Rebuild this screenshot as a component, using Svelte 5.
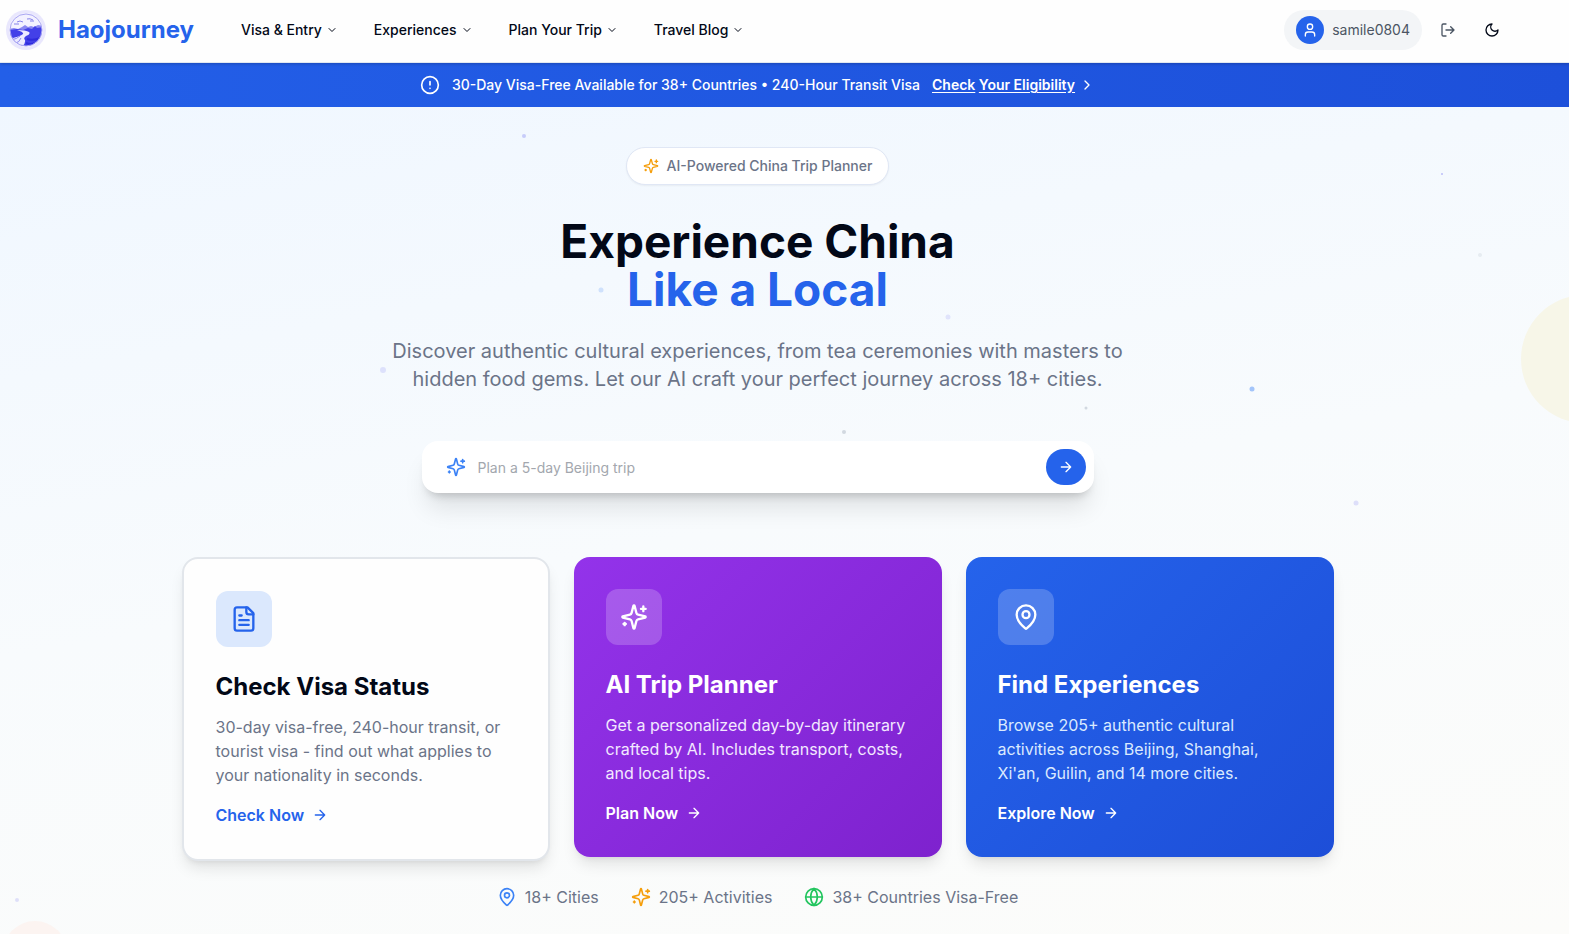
<script lang="ts">
	type Dot = { x: number; y: number; size: number; color: string; opacity: number }

	const nav = ['Visa & Entry', 'Experiences', 'Plan Your Trip', 'Travel Blog']

	const cards = [
		{
			kind: 'visa',
			icon: 'file',
			title: 'Check Visa Status',
			text: '30-day visa-free, 240-hour transit, or tourist visa - find out what applies to your nationality in seconds.',
			action: 'Check Now'
		},
		{
			kind: 'planner',
			icon: 'sparkles',
			title: 'AI Trip Planner',
			text: 'Get a personalized day-by-day itinerary crafted by AI. Includes transport, costs, and local tips.',
			action: 'Plan Now'
		},
		{
			kind: 'explore',
			icon: 'pin',
			title: 'Find Experiences',
			text: "Browse 205+ authentic cultural activities across Beijing, Shanghai, Xi'an, Guilin, and 14 more cities.",
			action: 'Explore Now'
		}
	]

	const stats = [
		{ icon: 'pin', color: '#3b82f6', label: '18+ Cities' },
		{ icon: 'sparkles', color: '#f59e0b', label: '205+ Activities' },
		{ icon: 'globe', color: '#22c55e', label: '38+ Countries Visa-Free' }
	]

	// centre of each dot: x in percent of the hero, y in pixels from its top
	const dots: Dot[] = [
		{ x: 33.4, y: 29, size: 4, color: '#6366f1', opacity: 0.3 },
		{ x: 38.3, y: 183, size: 5, color: '#3b82f6', opacity: 0.2 },
		{ x: 24.4, y: 263, size: 6, color: '#6366f1', opacity: 0.16 },
		{ x: 60.4, y: 210, size: 5, color: '#6366f1', opacity: 0.14 },
		{ x: 69.2, y: 301, size: 3, color: '#64748b', opacity: 0.25 },
		{ x: 53.8, y: 325, size: 4, color: '#64748b', opacity: 0.25 },
		{ x: 91.9, y: 67, size: 2, color: '#6366f1', opacity: 0.4 },
		{ x: 94.3, y: 148, size: 4, color: '#64748b', opacity: 0.1 },
		{ x: 79.8, y: 282, size: 5, color: '#3b82f6', opacity: 0.45 },
		{ x: 86.4, y: 396, size: 5, color: '#6366f1', opacity: 0.18 },
		{ x: 1.1, y: 793, size: 4, color: '#6366f1', opacity: 0.18 }
	]

	let query = $state('')
</script>

{#snippet icon(name: string, size: number)}
	<svg
		width={size}
		height={size}
		viewBox="0 0 24 24"
		fill="none"
		stroke="currentColor"
		stroke-width="2"
		stroke-linecap="round"
		stroke-linejoin="round"
		aria-hidden="true"
	>
		{#if name === 'sparkles'}
			<path d="M9.937 15.5A2 2 0 0 0 8.5 14.063l-6.135-1.582a.5.5 0 0 1 0-.962L8.5 9.936A2 2 0 0 0 9.937 8.5l1.582-6.135a.5.5 0 0 1 .963 0L14.063 8.5A2 2 0 0 0 15.5 9.937l6.135 1.581a.5.5 0 0 1 0 .964L15.5 14.063a2 2 0 0 0-1.437 1.437l-1.582 6.135a.5.5 0 0 1-.963 0z" />
			<path d="M20 3v4M22 5h-4M4 17v2M5 18H3" />
		{:else if name === 'pin'}
			<path d="M20 10c0 4.993-5.539 10.193-7.399 11.799a1 1 0 0 1-1.202 0C9.539 20.193 4 14.993 4 10a8 8 0 0 1 16 0" />
			<circle cx="12" cy="10" r="3" />
		{:else if name === 'file'}
			<path d="M15 2H6a2 2 0 0 0-2 2v16a2 2 0 0 0 2 2h12a2 2 0 0 0 2-2V7Z" />
			<path d="M14 2v4a2 2 0 0 0 2 2h4M10 9H8M16 13H8M16 17H8" />
		{:else if name === 'globe'}
			<circle cx="12" cy="12" r="10" />
			<path d="M12 2a14.5 14.5 0 0 0 0 20 14.5 14.5 0 0 0 0-20M2 12h20" />
		{:else if name === 'arrow'}
			<path d="M5 12h14M12 5l7 7-7 7" />
		{:else if name === 'down'}
			<path d="m6 9 6 6 6-6" />
		{:else if name === 'right'}
			<path d="m9 18 6-6-6-6" />
		{:else if name === 'alert'}
			<circle cx="12" cy="12" r="10" />
			<path d="M12 8v4M12 16h.01" />
		{:else if name === 'user'}
			<path d="M19 21v-2a4 4 0 0 0-4-4H9a4 4 0 0 0-4 4v2" />
			<circle cx="12" cy="7" r="4" />
		{:else if name === 'logout'}
			<path d="M9 21H5a2 2 0 0 1-2-2V5a2 2 0 0 1 2-2h4M16 17l5-5-5-5M21 12H9" />
		{:else if name === 'moon'}
			<path d="M12 3a6 6 0 0 0 9 9 9 9 0 1 1-9-9Z" />
		{/if}
	</svg>
{/snippet}

<div class="page">
	<header class="header">
		<a class="brand" href="/">
			<svg width="40" height="40" viewBox="0 0 40 40" aria-hidden="true">
				<defs>
					<clipPath id="logo-disc"><circle cx="20" cy="20" r="16" /></clipPath>
				</defs>
				<circle cx="20" cy="20" r="20" fill="#e9e7fd" />
				<circle cx="20" cy="20" r="17" fill="#f3f1ff" />
				<g clip-path="url(#logo-disc)">
					<path d="M3 19l5-1 4 1 4-2 3-2 3 2 3-1 3 1 4-2 6 1v22H3z" fill="#8a87f1" />
					<path d="M3 20l8-1 6 1 5-2 4 1 3-3 2 2 7-1v22H3z" fill="#4340e8" />
					<path d="M11 20q9 0 12 2 2 2-3 4-3 2-1 4 1 4-5 8L4 33q-1-4 3-5 8-2 10-4 1-2-6-4z" fill="#eceaff" />
					<path d="M5 30q6-1 9-4M8 34q6-2 7-6" fill="none" stroke="#8a87f1" stroke-width="1" />
					<path d="M21 29q6 2 13-1M20 33q5 2 9 0" fill="none" stroke="#2f2bdc" stroke-width="2" />
					<path d="M11 12q3-2 6 0M21 9q3-1 6 1M8 14h5M24 11h4" fill="none" stroke="#8683ea" stroke-width="1" />
				</g>
				<circle cx="20" cy="20" r="16" fill="none" stroke="#a9a6f2" stroke-width="1" />
			</svg>
			<span>Haojourney</span>
		</a>
		<nav class="nav">
			{#each nav as item}
				<button>{item}{@render icon('down', 12)}</button>
			{/each}
		</nav>
		<div class="account">
			<a class="user" href="/profile">
				<span class="avatar">{@render icon('user', 16)}</span>
				samile0804
			</a>
			<button class="tool logout" aria-label="Log out">{@render icon('logout', 16)}</button>
			<button class="tool" aria-label="Toggle dark mode">{@render icon('moon', 16)}</button>
		</div>
	</header>

	<div class="banner">
		{@render icon('alert', 20)}
		<span>30-Day Visa-Free Available for 38+ Countries • 240-Hour Transit Visa</span>
		<a href="/visa"><span><u>Check</u> <u>Your Eligibility</u></span>{@render icon('right', 16)}</a>
	</div>

	<main class="hero">
		<div class="decor" aria-hidden="true">
			{#each dots as dot}
				<i
					class="dot"
					style:left="{dot.x}%"
					style:top="{dot.y}px"
					style:width="{dot.size}px"
					style:height="{dot.size}px"
					style:background={dot.color}
					style:opacity={dot.opacity}
				></i>
			{/each}
			<i class="sun"></i>
			<i class="blush"></i>
		</div>

		<div class="tag">{@render icon('sparkles', 16)}AI-Powered China Trip Planner</div>
		<h1>Experience China<br /><span>Like a Local</span></h1>
		<p class="lead">
			Discover authentic cultural experiences, from tea ceremonies with masters to hidden food gems.
			Let our AI craft your perfect journey across 18+ cities.
		</p>

		<form class="search" onsubmit={(e) => e.preventDefault()}>
			{@render icon('sparkles', 20)}
			<input type="text" aria-label="Describe your trip" placeholder="Plan a 5-day Beijing trip" bind:value={query} />
			<button aria-label="Plan trip">{@render icon('arrow', 16)}</button>
		</form>

		<div class="cards">
			{#each cards as card}
				<article class="card {card.kind}">
					<div class="badge">{@render icon(card.icon, 28)}</div>
					<h2>{card.title}</h2>
					<p>{card.text}</p>
					<a href="/{card.kind}">{card.action}{@render icon('arrow', 16)}</a>
				</article>
			{/each}
		</div>

		<ul class="stats">
			{#each stats as stat}
				<li>
					<span style:color={stat.color}>{@render icon(stat.icon, 20)}</span>
					{stat.label}
				</li>
			{/each}
		</ul>
	</main>
</div>

<style>
	:global(body) {
		margin: 0;
	}

	.page {
		--gutter: 54px;
		--blue: #2563eb;
		min-height: 100vh;
		display: flex;
		flex-direction: column;
		font-family: Inter, 'Liberation Sans', sans-serif;
		font-size: 14px;
		line-height: 20px;
		color: #020817;
	}

	.page * {
		box-sizing: border-box;
	}

	svg {
		display: block;
		flex-shrink: 0;
	}

	a {
		color: inherit;
		text-decoration: none;
	}

	button {
		border: 0;
		padding: 0;
		background: none;
		font: inherit;
		color: inherit;
		cursor: pointer;
	}

	.header {
		position: relative;
		z-index: 1;
		display: flex;
		align-items: center;
		padding: 10px calc(var(--gutter) + 5px) 12px 6px;
		background: #fefefe;
		border-bottom: 1px solid #e2e8f0;
		box-shadow: 0 1px 3px rgb(0 0 0 / 0.2);
	}

	.brand {
		display: flex;
		align-items: center;
		gap: 12px;
		font-size: 24px;
		line-height: 32px;
		font-weight: 700;
		color: var(--blue);
	}

	.nav {
		display: flex;
		gap: 4px;
		margin-left: 31px;
	}

	.nav button {
		display: flex;
		align-items: center;
		gap: 4px;
		padding: 8px 16px;
		font-weight: 500;
	}

	.account {
		display: flex;
		align-items: center;
		gap: 8px;
		margin-left: auto;
	}

	.user {
		display: flex;
		align-items: center;
		gap: 8px;
		height: 40px;
		padding: 0 12px;
		border-radius: 20px;
		background: #f3f5f7;
		color: #4b5563;
	}

	.avatar {
		display: grid;
		place-items: center;
		width: 28px;
		height: 28px;
		border-radius: 50%;
		background: var(--blue);
		color: #fff;
	}

	.tool {
		display: grid;
		place-items: center;
		width: 36px;
		height: 36px;
	}

	.logout {
		color: #4b5563;
	}

	.banner {
		display: flex;
		align-items: center;
		justify-content: center;
		gap: 12px;
		padding: 12px var(--gutter) 12px 0;
		background: linear-gradient(90deg, #235fe8, #1d50da);
		color: #fff;
		font-weight: 500;
	}

	.banner a {
		display: flex;
		align-items: center;
		gap: 4px;
		font-weight: 600;
	}

	.banner u {
		text-underline-offset: 2px;
	}

	.hero {
		position: relative;
		flex: 1;
		display: flex;
		flex-direction: column;
		align-items: center;
		padding: 40px var(--gutter) 24px 0;
		background: linear-gradient(170deg, #f0f7ff, #f8fbfd 50%, #fcfcfa);
	}

	.decor {
		position: absolute;
		inset: 0;
		overflow: hidden;
		pointer-events: none;
	}

	.decor i {
		position: absolute;
		border-radius: 50%;
	}

	.decor .dot {
		transform: translate(-50%, -50%);
	}

	.decor .sun {
		top: 188px;
		right: -80px;
		width: 128px;
		height: 128px;
		background: #f7f6e8;
	}

	.decor .blush {
		left: 3px;
		bottom: -51px;
		width: 64px;
		height: 64px;
		background: #fcf4f1;
	}

	.tag,
	h1,
	.lead,
	.search,
	.cards,
	.stats {
		position: relative;
	}

	.tag {
		display: flex;
		align-items: center;
		gap: 8px;
		padding: 8px 16px;
		border: 1px solid #e0e7f5;
		border-radius: 20px;
		background: #fff;
		box-shadow: 0 1px 2px rgb(0 0 0 / 0.05);
		color: #6b7488;
		font-weight: 500;
	}

	.tag svg {
		color: #f59e0b;
	}

	h1 {
		margin: 32px 0 0;
		font-size: 46px;
		line-height: 48px;
		font-weight: 700;
		text-align: center;
	}

	h1 span {
		color: var(--blue);
	}

	.lead {
		max-width: 768px;
		margin: 24px 0 48px;
		font-size: 20px;
		line-height: 28px;
		text-align: center;
		color: #6b7488;
	}

	.search {
		display: flex;
		align-items: center;
		width: 100%;
		max-width: 672px;
		padding: 8px 8px 8px 24px;
		border-radius: 16px;
		background: #fff;
		box-shadow: 0 20px 25px -5px rgb(0 0 0 / 0.1), 0 8px 10px -6px rgb(0 0 0 / 0.2);
		color: #3b82f6;
	}

	.search input {
		flex: 1;
		min-width: 0;
		height: 36px;
		padding: 0 12px;
		border: 0;
		outline: 0;
		background: none;
		font: inherit;
		color: #020817;
	}

	.search input::placeholder {
		color: #a3a7ae;
	}

	.search button {
		display: grid;
		place-items: center;
		width: 40px;
		height: 36px;
		border-radius: 18px;
		background: var(--blue);
		color: #fff;
	}

	.cards {
		display: grid;
		grid-template-columns: repeat(3, 1fr);
		align-items: start;
		gap: 24px;
		width: 100%;
		max-width: 1152px;
		margin-top: 64px;
	}

	.card {
		padding: 32px;
		border-radius: 16px;
		box-shadow: 0 10px 15px -3px rgb(0 0 0 / 0.1), 0 4px 6px -4px rgb(0 0 0 / 0.1);
		color: #fff;
		font-size: 16px;
		line-height: 24px;
	}

	.visa {
		border: 2px solid #e2e6eb;
		background: #fefefe;
		color: #020817;
	}

	.planner {
		background: linear-gradient(135deg, #9333ea, #7e22ce);
	}

	.explore {
		background: linear-gradient(135deg, #2563eb, #1d4ed8);
	}

	.badge {
		display: grid;
		place-items: center;
		width: 56px;
		height: 56px;
		border-radius: 12px;
		background: rgb(255 255 255 / 0.2);
	}

	.visa .badge {
		background: #dbe8fd;
		color: var(--blue);
	}

	h2 {
		margin: 24px 0 12px;
		font-size: 24px;
		line-height: 32px;
		font-weight: 700;
	}

	.card p {
		margin: 0 0 16px;
	}

	.visa p {
		color: #6b7488;
	}

	.planner p {
		color: #f3e8ff;
	}

	.explore p {
		color: #dbeafe;
	}

	.card a {
		display: flex;
		align-items: center;
		gap: 8px;
		font-weight: 600;
	}

	.visa a {
		color: var(--blue);
	}

	.stats {
		display: flex;
		gap: 32px;
		margin: 24px 0 0;
		padding: 0;
		list-style: none;
		font-size: 16px;
		line-height: 24px;
		color: #6b7488;
	}

	.stats li {
		display: flex;
		align-items: center;
		gap: 8px;
	}
</style>
